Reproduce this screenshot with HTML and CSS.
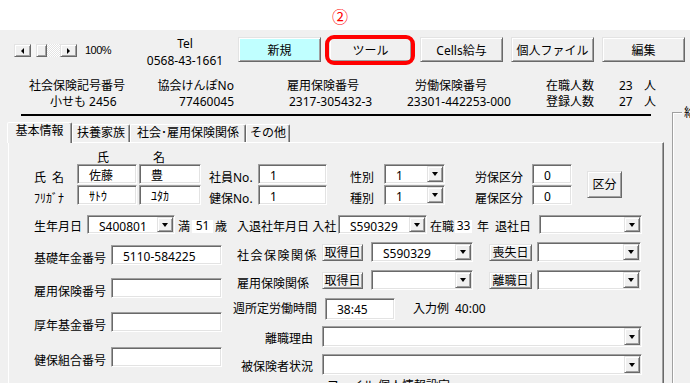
FILE: index.html
```html
<!DOCTYPE html>
<html lang="ja">
<head>
    <meta charset="UTF-8">
    <meta name="viewport" content="width=device-width, initial-scale=1.0">
    <title>個人情報</title>
    <link rel="stylesheet" href="styles.css">
</head>
<body>
    <div id="topBar"><span id="stepMark">②</span></div>

    <div id="toolBar">
        <div class="scroller">
            <span class="sb-btn sb-left"></span>
            <span class="sb-gap"></span>
            <span class="sb-thumb"></span>
            <span class="sb-track"></span>
            <span class="sb-btn sb-right"></span>
        </div>
        <span id="zoomText">100%</span>
        <div id="telBox">
            <div>Tel</div>
            <div>0568-43-1661</div>
        </div>
        <div id="toolButtons">
            <button class="btn btn-new">新規</button>
            <span class="mark-ring"><button class="btn">ツール</button></span>
            <button class="btn">Cells給与</button>
            <button class="btn">個人ファイル</button>
            <button class="btn">編集</button>
        </div>
    </div>

    <div id="content">
        <div id="mainColumn">
            <div id="officeInfo">
                <div class="col-kigo">
                    <div>社会保険記号番号</div>
                    <div class="val">小せも 2456</div>
                </div>
                <div class="col-kyokai">
                    <div>協会けんぽNo</div>
                    <div>77460045</div>
                </div>
                <div class="col-koyo">
                    <div>雇用保険番号</div>
                    <div class="val">2317-305432-3</div>
                </div>
                <div class="col-rodo">
                    <div class="lbl">労働保険番号</div>
                    <div>23301-442253-000</div>
                </div>
                <div class="col-count">
                    <span>在職人数</span><span>23</span><span>人</span>
                    <span>登録人数</span><span>27</span><span>人</span>
                </div>
            </div>
            <div id="rule"></div>

            <div id="tabStrip">
                <div class="tab tab-on t-kihon">基本情報</div>
                <div class="tab t-fuyo">扶養家族</div>
                <div class="tab t-hoken">社会･雇用保険関係</div>
                <div class="tab t-other">その他</div>
            </div>

            <div id="tabPanel">
                <div class="head">
                    <span class="lb h-sei">氏</span>
                    <span class="lb h-mei">名</span>
                </div>

                <div class="names">
                    <div class="pair">
                        <div class="row">
                            <span class="lb w-name">氏&ensp;名</span>
                            <div class="tb w-sei">佐藤</div>
                            <div class="tb w-mei">豊</div>
                            <span class="lb w-no">社員No.</span>
                            <div class="tb w-num">1</div>
                            <span class="lb w-sex">性別</span>
                            <div class="cb w-kind"><span class="txt">1</span><span class="dd"></span></div>
                            <span class="lb w-kbn">労保区分</span>
                            <div class="tb w-kv">0</div>
                        </div>
                        <div class="row">
                            <span class="lb w-name">ﾌﾘｶﾞﾅ</span>
                            <div class="tb w-sei">ｻﾄｳ</div>
                            <div class="tb w-mei">ﾕﾀｶ</div>
                            <span class="lb w-no">健保No.</span>
                            <div class="tb w-num">1</div>
                            <span class="lb w-sex">種別</span>
                            <div class="cb w-kind"><span class="txt">1</span><span class="dd"></span></div>
                            <span class="lb w-kbn">雇保区分</span>
                            <div class="tb w-kv">0</div>
                        </div>
                    </div>
                    <button class="btn btn-kbn">区分</button>
                </div>

                <div class="row dates">
                    <span class="lb w-birth">生年月日</span>
                    <div class="cb w-bd"><span class="txt">S400801</span><span class="dd"></span></div>
                    <span class="lb ml3">満</span>
                    <span class="ro w-age">51</span>
                    <span class="lb ml2">歳</span>
                    <span class="lb w-join">入退社年月日 入社</span>
                    <div class="cb w-jd"><span class="txt">S590329</span><span class="dd"></span></div>
                    <span class="lb ml3">在職</span>
                    <span class="ro w-years">33</span>
                    <span class="lb ml5">年</span>
                    <span class="lb w-leave">退社日</span>
                    <div class="cb w-ld"><span class="txt"></span><span class="dd"></span></div>
                </div>

                <div class="lower">
                    <div class="lcol">
                        <div class="row">
                            <span class="lb w-ltitle">基礎年金番号</span>
                            <div class="tb w-lval">5110-584225</div>
                        </div>
                        <div class="row g13">
                            <span class="lb w-ltitle">雇用保険番号</span>
                            <div class="tb w-lval"></div>
                        </div>
                        <div class="row g14">
                            <span class="lb w-ltitle">厚年基金番号</span>
                            <div class="tb w-lval"></div>
                        </div>
                        <div class="row g15">
                            <span class="lb w-ltitle">健保組合番号</span>
                            <div class="tb w-lval"></div>
                        </div>
                    </div>

                    <div class="rcol">
                        <div class="row">
                            <span class="lb w-rtitle wide">社会保険関係</span>
                            <button class="sbtn w-get">取得日</button>
                            <div class="cb w-getd"><span class="txt">S590329</span><span class="dd"></span></div>
                            <button class="sbtn w-lose">喪失日</button>
                            <div class="cb w-losed"><span class="txt"></span><span class="dd"></span></div>
                        </div>
                        <div class="row g8">
                            <span class="lb w-rtitle">雇用保険関係</span>
                            <button class="sbtn w-get">取得日</button>
                            <div class="cb w-getd"><span class="txt"></span><span class="dd"></span></div>
                            <button class="sbtn w-lose">離職日</button>
                            <div class="cb w-losed"><span class="txt"></span><span class="dd"></span></div>
                        </div>
                        <div class="row g8 hours">
                            <span class="lb w-hours">週所定労働時間</span>
                            <div class="tb w-hv">38:45</div>
                            <span class="lb ml18">入力例&ensp;40:00</span>
                        </div>
                        <div class="row g6 tall">
                            <span class="lb w-reason">離職理由</span>
                            <div class="cb w-long"><span class="txt"></span><span class="dd"></span></div>
                        </div>
                        <div class="row g7 tall">
                            <span class="lb w-reason">被保険者状況</span>
                            <div class="cb w-long"><span class="txt"></span><span class="dd"></span></div>
                        </div>
                        <div class="note">ファイル 個人情報設定</div>
                    </div>
                </div>
            </div>
        </div>

        <div id="payGroup"><span id="payGroupTitle">給与明細</span></div>
    </div>
</body>
</html>
```

FILE: styles.css
```css
/* Base page */
html, body {
    margin: 0;
    height: 100%;
    overflow: hidden;
}

body {
    background-color: #f0f0f0;
    font-family: "Noto Sans", "Noto Sans CJK JP", sans-serif;
    font-size: 12px;
    color: #000;
}

/* White strip with the step number */
#topBar {
    height: 30px;
    background-color: #fff;
}

#stepMark {
    display: block;
    padding: 8px 0 0 332px;
    font-family: "Noto Sans CJK JP", sans-serif;
    font-size: 16px;
    line-height: 16px;
    color: #f00;
}

/* Raised 3D look shared by buttons */
.sb-btn, .sb-thumb, .btn, .sbtn, .dd {
    box-sizing: border-box;
    background-color: #f0f0f0;
    border: 1px solid;
    border-color: #e3e3e3 #696969 #696969 #e3e3e3;
    box-shadow: inset 1px 1px #fff, inset -1px -1px #a0a0a0;
}

/* Tool bar */
#toolBar {
    display: flex;
    align-items: flex-start;
    height: 48px;
}

.scroller {
    display: flex;
    height: 13px;
    margin: 14px 0 0 14px;
}

.sb-btn {
    width: 17px;
    display: flex;
    align-items: center;
    justify-content: center;
}

.sb-left::after {
    content: "";
    border-top: 3px solid transparent;
    border-bottom: 3px solid transparent;
    border-right: 3px solid #000;
}

.sb-right::after {
    content: "";
    border-top: 3px solid transparent;
    border-bottom: 3px solid transparent;
    border-left: 3px solid #000;
}

.sb-gap {
    width: 5px;
    background-color: #f6f6f6;
}

.sb-thumb {
    width: 11px;
}

.sb-track {
    width: 13px;
    background: repeating-conic-gradient(#fff 0 25%, #e4e4e4 0 50%) 0 0 / 2px 2px;
}

#zoomText {
    width: 26px;
    margin: 14px 0 0 8px;
    font-family: "Liberation Sans", sans-serif;
    font-size: 11px;
    line-height: 12px;
    letter-spacing: -0.5px;
}

#telBox {
    width: 90px;
    margin: 5px 0 0 29px;
    text-align: center;
    line-height: 17px;
}

#toolButtons {
    display: flex;
    gap: 8px;
    margin: 7px 0 0 8px;
}

.btn {
    width: 83px;
    height: 25px;
    padding: 2px 0 0;
    font: inherit;
    line-height: 21px;
    color: #000;
}

.btn-new {
    background-color: #c0ffff;
}

/* Red marker round the tool button */
.mark-ring {
    position: relative;
    display: flex;
}

.mark-ring::after {
    content: "";
    position: absolute;
    top: -2px;
    right: -3px;
    bottom: -3px;
    left: -4px;
    border: 4px solid #f00;
    border-radius: 9px;
}

/* Office info and the two columns below */
#content {
    display: flex;
}

#mainColumn {
    flex: none;
    width: 664px;
}

#officeInfo {
    display: flex;
    padding-left: 29px;
    line-height: 16px;
    white-space: nowrap;
}

.col-kigo {
    width: 121px;
}

.col-kigo .val {
    padding-left: 21px;
}

.col-kyokai {
    width: 84px;
    text-align: right;
}

.col-koyo {
    width: 120px;
    margin-left: 53px;
}

.col-koyo .val {
    padding-left: 2px;
}

.col-rodo {
    width: 139px;
}

.col-rodo .lbl {
    padding-left: 8px;
}

.col-count {
    display: grid;
    grid-template-columns: 73px 25px auto;
}

#rule {
    width: 630px;
    height: 2px;
    margin: 4px 0 0 21px;
    background-color: #000;
}

/* Tabs */
#tabStrip {
    display: flex;
    align-items: flex-end;
    height: 20px;
    margin: 6px 0 0 7px;
}

.tab {
    box-sizing: border-box;
    height: 18px;
    padding-top: 1px;
    line-height: 14px;
    text-align: center;
    white-space: nowrap;
    border: 1px solid;
    border-bottom: none;
    border-color: #fff #696969 transparent #fff;
    border-radius: 2px 2px 0 0;
    box-shadow: inset -1px 0 #a0a0a0;
}

.tab-on {
    position: relative;
    z-index: 1;
    height: 21px;
    margin-bottom: -1px;
    background-color: #f0f0f0;
}

.t-kihon { width: 65px; }
.t-fuyo { width: 58px; }
.t-hoken { width: 116px; }
.t-other { width: 44px; }

#tabPanel {
    box-sizing: border-box;
    width: 656px;
    height: 260px;
    margin-left: 8px;
    padding-left: 25px;
    border-top: 1px solid #fff;
    border-left: 1px solid #fff;
    border-right: 1px solid #696969;
    box-shadow: inset -1px 0 #a0a0a0;
}

/* Form rows */
.row {
    display: flex;
    align-items: flex-end;
    height: 20px;
}

.lb {
    flex: none;
    line-height: 14px;
    margin-bottom: -1px;
    white-space: nowrap;
}

.tb, .cb {
    flex: none;
    align-self: stretch;
    box-sizing: border-box;
    background-color: #fff;
    border: 1px solid;
    border-color: #a0a0a0 #fff #fff #a0a0a0;
    box-shadow: inset 1px 1px #696969, inset -1px -1px #e3e3e3;
    white-space: nowrap;
}

.tb {
    padding: 3px 0 0 11px;
    line-height: 16px;
}

.cb {
    display: flex;
    padding: 1px;
}

.cb .txt {
    flex: 1;
    padding: 2px 0 0 10px;
    line-height: 16px;
}

.dd {
    width: 16px;
    display: flex;
    align-items: center;
    justify-content: center;
}

.dd::after {
    content: "";
    border-left: 3.5px solid transparent;
    border-right: 3.5px solid transparent;
    border-top: 4px solid #000;
}

.ro {
    flex: none;
    height: 13px;
    margin-bottom: 1px;
    line-height: 11px;
    text-align: center;
    background-color: #fff;
}

.sbtn {
    flex: none;
    height: 17px;
    margin-bottom: 1px;
    padding: 0;
    font: inherit;
    line-height: 15px;
    color: #000;
}

.ml2 { margin-left: 2px; }
.ml3 { margin-left: 3px; }
.ml5 { margin-left: 5px; }
.ml18 { margin-left: 18px; }

/* Name block */
.head {
    display: flex;
    align-items: flex-end;
    height: 21px;
}

.h-sei { margin-left: 63px; }
.h-mei { margin-left: 44px; }

.names {
    display: flex;
    align-items: center;
}

.pair .row + .row {
    margin-top: 1px;
}

.w-name { width: 43px; }
.w-sei { width: 60px; }
.w-mei { width: 62px; margin-left: 2px; }
.w-no { width: 49px; margin-left: 8px; }
.w-num { width: 69px; }
.w-sex { width: 34px; margin-left: 23px; }
.w-kind { width: 61px; }
.w-kbn { width: 57px; margin-left: 30px; }
.w-kv { width: 40px; }

.btn-kbn {
    width: 35px;
    height: 27px;
    margin-left: 15px;
    padding: 0;
    line-height: 23px;
}

/* Dates row */
.dates {
    height: 19px;
    margin-top: 10px;
}

.dates .lb {
    margin-bottom: 0;
}

.w-birth { width: 53px; }
.w-bd { width: 88px; }
.w-age { width: 21px; margin-left: 2px; }
.w-join { width: 101px; margin-left: 10px; }
.w-jd { width: 89px; }
.w-years { width: 17px; margin-left: 1px; }
.w-leave { width: 44px; margin-left: 6px; }
.w-ld { width: 103px; }

/* Lower block */
.lower {
    display: flex;
    align-items: flex-start;
    margin-top: 8px;
}

.lcol {
    flex: none;
    width: 188px;
    padding-top: 3px;
}

.rcol {
    margin-left: 11px;
}

.g6 { margin-top: 6px; }
.g7 { margin-top: 7px; }
.g8 { margin-top: 8px; }
.g13 { margin-top: 13px; }
.g14 { margin-top: 14px; }
.g15 { margin-top: 15px; }

.w-ltitle { width: 77px; }
.w-lval { width: 111px; }

.w-rtitle { width: 85px; margin-left: 4px; }
.wide { letter-spacing: 1.5px; }
.w-get { width: 41px; }
.w-getd { width: 102px; margin-left: 8px; }
.w-lose { width: 43px; margin-left: 16px; }
.w-losed { width: 104px; margin-left: 5px; }

.hours {
    height: 22px;
    align-items: center;
}

.hours .lb {
    margin-bottom: 0;
}

.w-hours { width: 92px; }
.w-hv { width: 70px; }

.tall {
    height: 21px;
}

.tall .lb {
    margin-bottom: 1px;
}

.w-reason { width: 80px; text-align: right; }
.w-long { width: 320px; margin-left: 9px; }

.note {
    margin-top: 4px;
    padding-left: 94px;
    line-height: 14px;
}

/* Group box on the right edge */
#payGroup {
    flex: none;
    width: 120px;
    height: 300px;
    margin: 34px 0 0 8px;
    border-top: 1px solid #a0a0a0;
    border-left: 1px solid #a0a0a0;
    box-shadow: inset 1px 1px #fff;
}

#payGroupTitle {
    display: block;
    width: max-content;
    margin: -7px 0 0 9px;
    padding: 0 2px;
    line-height: 14px;
    background-color: #f0f0f0;
}
```
